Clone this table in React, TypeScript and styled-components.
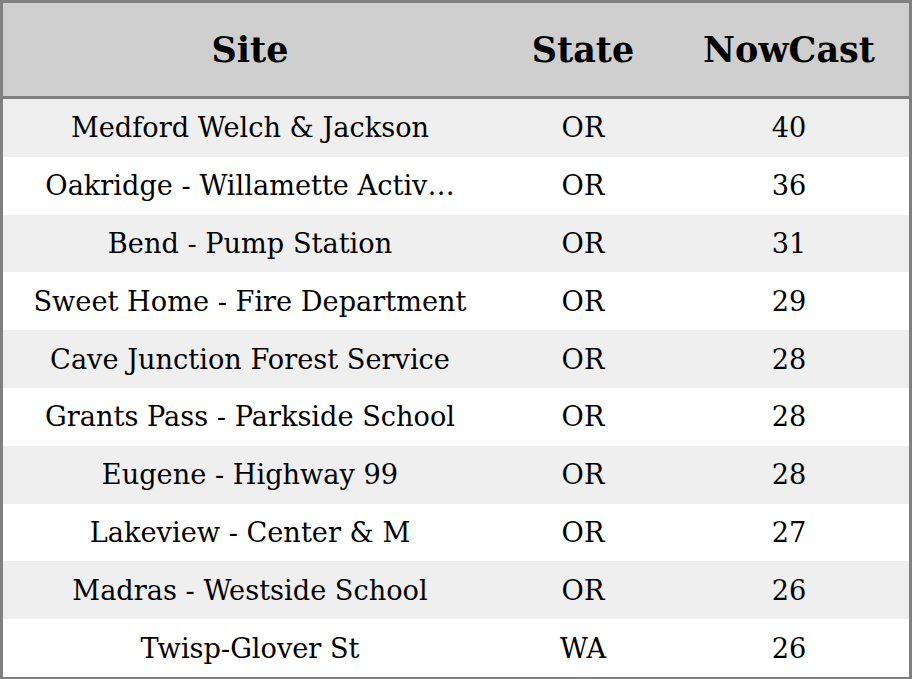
import React from "react";
import styled, { createGlobalStyle } from "styled-components";

const Global = createGlobalStyle`
  html, body { margin: 0; padding: 0; background: #ffffff; }
  body { font-family: "DejaVu Serif", serif; color: #000; }
`;

const Table = styled.table`
  width: 912px;
  border-collapse: collapse;
  border: 3px solid #808080;
  table-layout: fixed;
  font-family: "DejaVu Serif", serif;
`;

const HeadRow = styled.tr`
  background: #cfcfcf;
  border-bottom: 3px solid #808080;
`;

const HeadCell = styled.th<{ $w: number }>`
  width: ${(p) => p.$w}px;
  height: 93px;
  padding: 0;
  text-align: center;
  font-size: 35px;
  font-weight: bold;
`;

const Row = styled.tr<{ $alt: boolean }>`
  background: ${(p) => (p.$alt ? "#efefef" : "#ffffff")};
`;

const Cell = styled.td`
  height: 57.8px;
  padding: 0 4px;
  text-align: center;
  font-size: 27.2px;
  white-space: nowrap;
  overflow: hidden;
  text-overflow: ellipsis;
`;

const rows: [string, string, number][] = [
  ["Medford Welch & Jackson", "OR", 40],
  ["Oakridge - Willamette Activ…", "OR", 36],
  ["Bend - Pump Station", "OR", 31],
  ["Sweet Home - Fire Department", "OR", 29],
  ["Cave Junction Forest Service", "OR", 28],
  ["Grants Pass - Parkside School", "OR", 28],
  ["Eugene - Highway 99", "OR", 28],
  ["Lakeview - Center & M", "OR", 27],
  ["Madras - Westside School", "OR", 26],
  ["Twisp-Glover St", "WA", 26],
];

export default function App() {
  return (
    <>
      <Global />
      <Table>
        <thead>
          <HeadRow>
            <HeadCell $w={494}>Site</HeadCell>
            <HeadCell $w={172}>State</HeadCell>
            <HeadCell $w={240}>NowCast</HeadCell>
          </HeadRow>
        </thead>
        <tbody>
          {rows.map(([site, st, v], i) => (
            <Row key={i} $alt={i % 2 === 0}>
              <Cell>{site}</Cell>
              <Cell>{st}</Cell>
              <Cell>{v}</Cell>
            </Row>
          ))}
        </tbody>
      </Table>
    </>
  );
}
